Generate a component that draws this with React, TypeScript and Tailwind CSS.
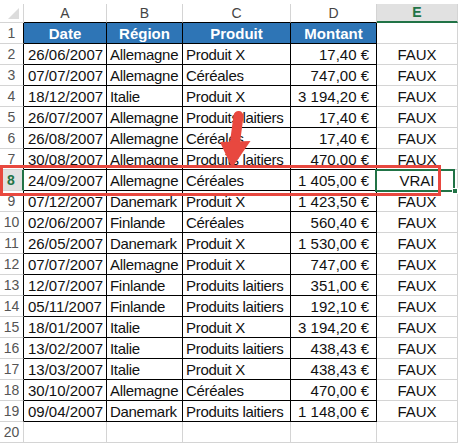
import React from 'react';

type Row = [string, string, string, string, string];

const rows: Row[] = [
  ['26/06/2007', 'Allemagne', 'Produit X', '17,40 €', 'FAUX'],
  ['07/07/2007', 'Allemagne', 'Céréales', '747,00 €', 'FAUX'],
  ['18/12/2007', 'Italie', 'Produit X', '3 194,20 €', 'FAUX'],
  ['26/07/2007', 'Allemagne', 'Produits laitiers', '17,40 €', 'FAUX'],
  ['26/08/2007', 'Allemagne', 'Céréales', '17,40 €', 'FAUX'],
  ['30/08/2007', 'Allemagne', 'Produits laitiers', '470,00 €', 'FAUX'],
  ['24/09/2007', 'Allemagne', 'Céréales', '1 405,00 €', 'VRAI'],
  ['07/12/2007', 'Danemark', 'Produit X', '1 423,50 €', 'FAUX'],
  ['02/06/2007', 'Finlande', 'Céréales', '560,40 €', 'FAUX'],
  ['26/05/2007', 'Danemark', 'Produit X', '1 530,00 €', 'FAUX'],
  ['07/07/2007', 'Allemagne', 'Produit X', '747,00 €', 'FAUX'],
  ['12/07/2007', 'Finlande', 'Produits laitiers', '351,00 €', 'FAUX'],
  ['05/11/2007', 'Finlande', 'Produits laitiers', '192,10 €', 'FAUX'],
  ['18/01/2007', 'Italie', 'Produit X', '3 194,20 €', 'FAUX'],
  ['13/02/2007', 'Italie', 'Produits laitiers', '438,43 €', 'FAUX'],
  ['13/03/2007', 'Italie', 'Produit X', '438,43 €', 'FAUX'],
  ['30/10/2007', 'Allemagne', 'Céréales', '470,00 €', 'FAUX'],
  ['09/04/2007', 'Danemark', 'Produits laitiers', '1 148,00 €', 'FAUX'],
];

const grid = 'grid grid-cols-[24px_83px_76px_108px_86px_81px_1px]';
const cell = 'h-[21px] border-r border-b flex items-end pb-[1px] leading-[17px] whitespace-nowrap overflow-hidden';

function ColHeader({ label, active }: { label: string; active?: boolean }) {
  if (active) {
    return (
      <div className="h-[19px] bg-[#e1e1e1] border-r border-[#d4d4d4] border-b-2 border-b-[#217346] flex items-center justify-center text-[14px] font-bold text-[#217346]">
        {label}
      </div>
    );
  }
  return (
    <div className="h-[19px] border-r border-[#d4d4d4] border-b border-b-black flex items-center justify-center text-[14px] text-[#444]">
      {label}
    </div>
  );
}

function RowNum({ n, active, inTable }: { n: number; active?: boolean; inTable: boolean }) {
  if (active) {
    return (
      <div className="h-[21px] bg-[#e1e1e1] border-b border-b-[#d4d4d4] border-r-2 border-r-[#217346] flex items-center justify-center text-[14px] font-bold text-[#217346]">
        {n}
      </div>
    );
  }
  return (
    <div
      className={
        'h-[21px] border-b border-b-[#d4d4d4] border-r flex items-center justify-center text-[14px] text-[#555] ' +
        (inTable ? 'border-r-black' : 'border-r-[#d4d4d4]')
      }
    >
      {n}
    </div>
  );
}

export default function App() {
  return (
    <div className="relative w-[459px] h-[447px] bg-white overflow-hidden pt-1 font-['Liberation_Sans',Arial,sans-serif] text-[15px] text-[#111]">
      {/* column headers */}
      <div className={grid}>
        <div className="h-[19px] border-r border-b border-[#d4d4d4] flex items-end justify-end pr-[4px] pb-[3px]">
          <svg width="11" height="11" viewBox="0 0 11 11">
            <polygon points="11,0 11,11 0,11" fill="#dcdcdc" />
          </svg>
        </div>
        <ColHeader label="A" />
        <ColHeader label="B" />
        <ColHeader label="C" />
        <ColHeader label="D" />
        <ColHeader label="E" active />
        <div />
      </div>

      {/* header row 1 */}
      <div className={grid}>
        <RowNum n={1} inTable />
        {['Date', 'Région', 'Produit', 'Montant'].map((h) => (
          <div key={h} className={cell + ' bg-[#2e75b6] border-black justify-center font-bold text-white'}>
            {h}
          </div>
        ))}
        <div className={cell + ' border-[#d4d4d4]'} />
        <div />
      </div>

      {/* data rows */}
      {rows.map((r, i) => {
        const n = i + 2;
        return (
          <div key={n} className={grid}>
            <RowNum n={n} active={n === 8} inTable />
            <div className={cell + ' border-black pl-[4px]'}>{r[0]}</div>
            <div className={cell + ' border-black pl-[3px] tracking-[-0.3px]'}>{r[1]}</div>
            <div className={cell + ' border-black pl-[3px] tracking-[-0.3px]'}>{r[2]}</div>
            <div className={cell + ' border-black justify-end pr-[7px]'}>{r[3]}</div>
            <div className={cell + ' border-[#d4d4d4] justify-center'}>{r[4]}</div>
            <div />
          </div>
        );
      })}

      {/* empty row 20 */}
      <div className={grid}>
        <RowNum n={20} inTable={false} />
        {[0, 1, 2, 3, 4].map((k) => (
          <div key={k} className={cell + ' border-[#d4d4d4]'} />
        ))}
        <div />
      </div>

      {/* selection on E8 */}
      <div className="absolute left-[375px] top-[169px] w-[80px] h-[23px] border-2 border-[#217346]" />
      <div className="absolute left-[452px] top-[188px] w-[6px] h-[6px] bg-[#217346] border border-white" />

      {/* red highlight frame */}
      <div className="absolute left-0 top-[165px] w-[441px] h-[31px] border-[3px] border-[#e8483f]" />

      {/* arrow */}
      <svg className="absolute left-0 top-0 pointer-events-none" width="459" height="447">
        <line x1="238.5" y1="116" x2="234.5" y2="146" stroke="#e8483f" strokeWidth="10" strokeLinecap="round" />
        <polygon points="220,142 250.5,141 232,168" fill="#e8483f" />
      </svg>
    </div>
  );
}
